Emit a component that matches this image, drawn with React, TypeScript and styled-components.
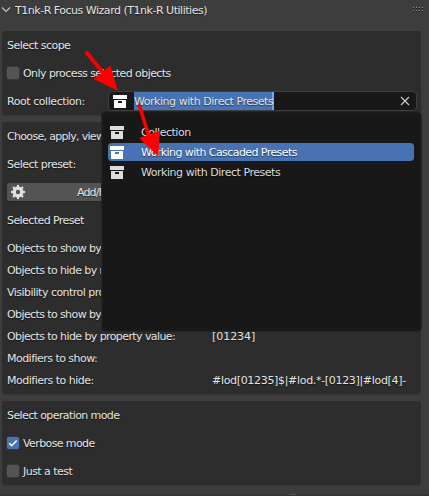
import React from "react";
import styled, { createGlobalStyle } from "styled-components";

const GlobalStyle = createGlobalStyle`
  * { box-sizing: border-box; }
  body { margin: 0; background: #3d3d3d; overflow: hidden; }
`;

const Page = styled.main`
  position: relative;
  width: 429px;
  height: 496px;
  overflow: hidden;
  background: #3d3d3d;
  color: #e4e4e4;
  font: 11px/20px "DejaVu Sans", sans-serif;
  text-shadow: 0 1px 1px rgba(0, 0, 0, 0.55);
  white-space: pre;
  display: flex;
  flex-direction: column;
`;

const Header = styled.header`
  height: 20px;
  margin-bottom: 11px;
  flex: none;
  display: flex;
  align-items: center;
  padding: 0 5px 0 1px;
`;

const Chevron = styled.svg`
  width: 10px;
  height: 20px;
  margin-right: 4px;
`;

const Grip = styled.svg`
  width: 12px;
  height: 20px;
  margin-left: auto;
`;

const Panels = styled.div`
  display: flex;
  flex-direction: column;
  gap: 7px;
  padding: 0 8px 0 2px;
`;

const Panel = styled.section`
  display: flex;
  flex-direction: column;
  gap: 8px;
  padding: 4px 5px;
  background: #2d2d2d;
  border-radius: 3px;
  box-shadow: 0 2px 0 -1px #363636;
`;

const Row = styled.div`
  display: flex;
  align-items: center;
  height: 20px;
`;

const Details = styled.div`
  display: flex;
  flex-direction: column;
  gap: 2px;
`;

const Label = styled.span<{ $track?: number; $width?: number }>`
  letter-spacing: ${(p) => p.$track ?? -0.53}px;
  width: ${(p) => (p.$width ? `${p.$width}px` : "auto")};
  padding-top: 2px;
  flex: none;
`;

const Box = styled.span<{ $on?: boolean }>`
  width: 12px;
  height: 12px;
  margin-right: 4px;
  border-radius: 2px;
  background: ${(p) => (p.$on ? "#4772b3" : "#545454")};
  box-shadow: 0 0 0 0.5px #444;
  display: flex;
`;

const Field = styled.div`
  flex: none;
  width: 309px;
  height: 20px;
  display: flex;
  align-items: center;
  background: #181818;
  border: 1px solid #404040;
  border-radius: 4px;
  padding-left: 4px;
  padding-right: 6px;
`;

const Selection = styled.span`
  height: 18px;
  width: 140px;
  margin-left: 7px;
  display: flex;
  align-items: center;
  background: #4772b3;
  border-right: 2px solid #71a8ff;
`;

const Clear = styled.svg`
  width: 10px;
  height: 10px;
  margin-left: auto;
`;

const Button = styled.div`
  height: 18px;
  margin: 1px 0;
  display: flex;
  align-items: center;
  padding-left: 3px;
  background: #545454;
  border-radius: 3px;
  box-shadow: 0 1px 1px #242424;
`;

const Gear = styled.svg`
  width: 16px;
  height: 16px;
  margin-right: 51px;
`;

const Menu = styled.div`
  position: absolute;
  left: 102px;
  top: 112px;
  width: 319px;
  height: 219px;
  padding: 9px 6px 0 5px;
  background: #181818;
  border: 1px solid #1c1c1c;
  border-radius: 4px;
  box-shadow: 0 0 0 1px #242424;
`;

const Item = styled.div<{ $active?: boolean }>`
  height: 20px;
  display: flex;
  align-items: center;
  padding-left: 2px;
  border-radius: 4px;
  color: ${(p) => (p.$active ? "#fff" : "#dcdcdc")};
  background: ${(p) => (p.$active ? "#4772b3" : "transparent")};
  background-clip: padding-box;
  border-top: 1px solid transparent;
  border-bottom: 1px solid transparent;
`;

const Crate = styled.svg`
  width: 14px;
  height: 14px;
  flex: none;
`;

const ItemText = styled.span<{ $track?: number }>`
  margin-left: 17px;
  padding-top: 2px;
  letter-spacing: ${(p) => p.$track ?? 0}px;
`;

const Pointers = styled.svg`
  position: absolute;
  left: 0;
  top: 0;
  pointer-events: none;
`;

const BottomEdge = styled.div`
  height: 2px;
  margin-top: auto;
  background: #343434;
  display: flex;
  padding-left: 289px;
`;

const Handle = styled.span`
  width: 7px;
  height: 1px;
  background: #505050;
`;

function CollectionIcon({ color = "#fff" }: { color?: string }) {
  return (
    <Crate viewBox="0 0 14 14">
      <path fill={color} fillRule="evenodd" d="M0 1h14v4H0zM1 6h12v8H1zM5 7v2h4V7z" />
    </Crate>
  );
}

const scopes = [
  { name: "Collection", track: -0.47 },
  { name: "Working with Cascaded Presets", track: -0.57, active: true },
  { name: "Working with Direct Presets", track: -0.46 },
];

const details = [
  { name: "Objects to show by name:", track: -0.6 },
  { name: "Objects to hide by name:", track: -0.6 },
  { name: "Visibility control property:", track: -0.52 },
  { name: "Objects to show by property value:", track: -0.6 },
  { name: "Objects to hide by property value:", track: -0.59 },
  { name: "Modifiers to show:", track: -0.53 },
  { name: "Modifiers to hide:", track: -0.5 },
];

const values: Record<string, { text: string; track: number }> = {
  "Objects to hide by property value:": { text: "[01234]", track: -0.05 },
  "Modifiers to hide:": { text: "#lod[01235]$|#lod.*-[0123]|#lod[4]-", track: -0.32 },
};

export default function App() {
  return (
    <>
      <GlobalStyle />
      <Page>
        <Header>
          <Chevron viewBox="0 0 10 20">
            <path d="M1 7.5l4 4 4-4" fill="none" stroke="#c4c4c4" strokeWidth="1.1" />
          </Chevron>
          <Label $track={-0.48}>T1nk-R Focus Wizard (T1nk-R Utilities)</Label>
          <Grip viewBox="0 0 12 20" shapeRendering="crispEdges">
            {[0, 3, 6, 9].map((x) =>
              [7, 10].map((y) => (
                <g key={`${x}-${y}`}>
                  <rect x={x + 1} y={y} width="1" height="1" fill="#999" />
                  <rect x={x + 1} y={y + 1} width="1" height="1" fill="#161616" />
                </g>
              )),
            )}
          </Grip>
        </Header>
        <Panels>
          <Panel>
            <Row><Label>Select scope</Label></Row>
            <Row><Box /><Label $track={-0.56}>Only process selected objects</Label></Row>
            <Row>
              <Label $width={101} $track={-0.44}>Root collection:</Label>
              <Field>
                <CollectionIcon />
                <Selection><Label $track={-0.46}>Working with Direct Presets</Label></Selection>
                <Clear viewBox="0 0 10 10">
                  <path d="M1 1l8 8M9 1l-8 8" stroke="#d0d0d0" strokeWidth="1.1" />
                </Clear>
              </Field>
            </Row>
          </Panel>
          <Panel>
            <Row><Label $track={-0.68}>Choose, apply, view</Label></Row>
            <Row><Label>Select preset:</Label></Row>
            <Button>
              <Gear viewBox="0 0 16 16">
                <circle cx="8" cy="8" r="3.8" fill="none" stroke="#e2e2e2" strokeWidth="3.2" />
                {[0, 45, 90, 135, 180, 225, 270, 315].map((a) => (
                  <path key={a} d="M6.7 3.5L7 1h2l.3 2.5z" fill="#e2e2e2" transform={`rotate(${a} 8 8)`} />
                ))}
              </Gear>
              <Label $track={-0.85}>Add/Edit</Label>
            </Button>
            <Row><Label $track={-0.58}>Selected Preset</Label></Row>
            <Details>
              {details.map((d) => (
                <Row key={d.name}>
                  <Label $track={d.track} $width={205}>{d.name}</Label>
                  {values[d.name] && (
                    <Label $track={values[d.name].track}>{values[d.name].text}</Label>
                  )}
                </Row>
              ))}
            </Details>
          </Panel>
          <Panel>
            <Row><Label $track={-0.6}>Select operation mode</Label></Row>
            <Row>
              <Box $on>
                <svg width="12" height="12" viewBox="0 0 12 12">
                  <path d="M2.2 6.2l2.5 2.5 5-5.2" fill="none" stroke="#fff" strokeWidth="1.6" />
                </svg>
              </Box>
              <Label $track={-0.6}>Verbose mode</Label>
            </Row>
            <Row><Box /><Label>Just a test</Label></Row>
          </Panel>
        </Panels>
        <BottomEdge><Handle /></BottomEdge>
        <Menu>
          {scopes.map((s) => (
            <Item key={s.name} $active={s.active}>
              <CollectionIcon color={s.active ? "#fff" : "#dcdcdc"} />
              <ItemText $track={s.track}>{s.name}</ItemText>
            </Item>
          ))}
        </Menu>
        <Pointers width="429" height="496" viewBox="0 0 429 496" fill="#f00" stroke="#f00">
          <path d="M87 53l17 21" strokeWidth="3.8" strokeLinecap="round" />
          <path d="M117.500 90.500L93.500 79L110.500 65.500z" stroke="none" />
          <path d="M139.500 106l9 29" strokeWidth="3.6" strokeLinecap="round" />
          <path d="M158.500 156.500L139 138L159.500 131z" stroke="none" />
        </Pointers>
      </Page>
    </>
  );
}
